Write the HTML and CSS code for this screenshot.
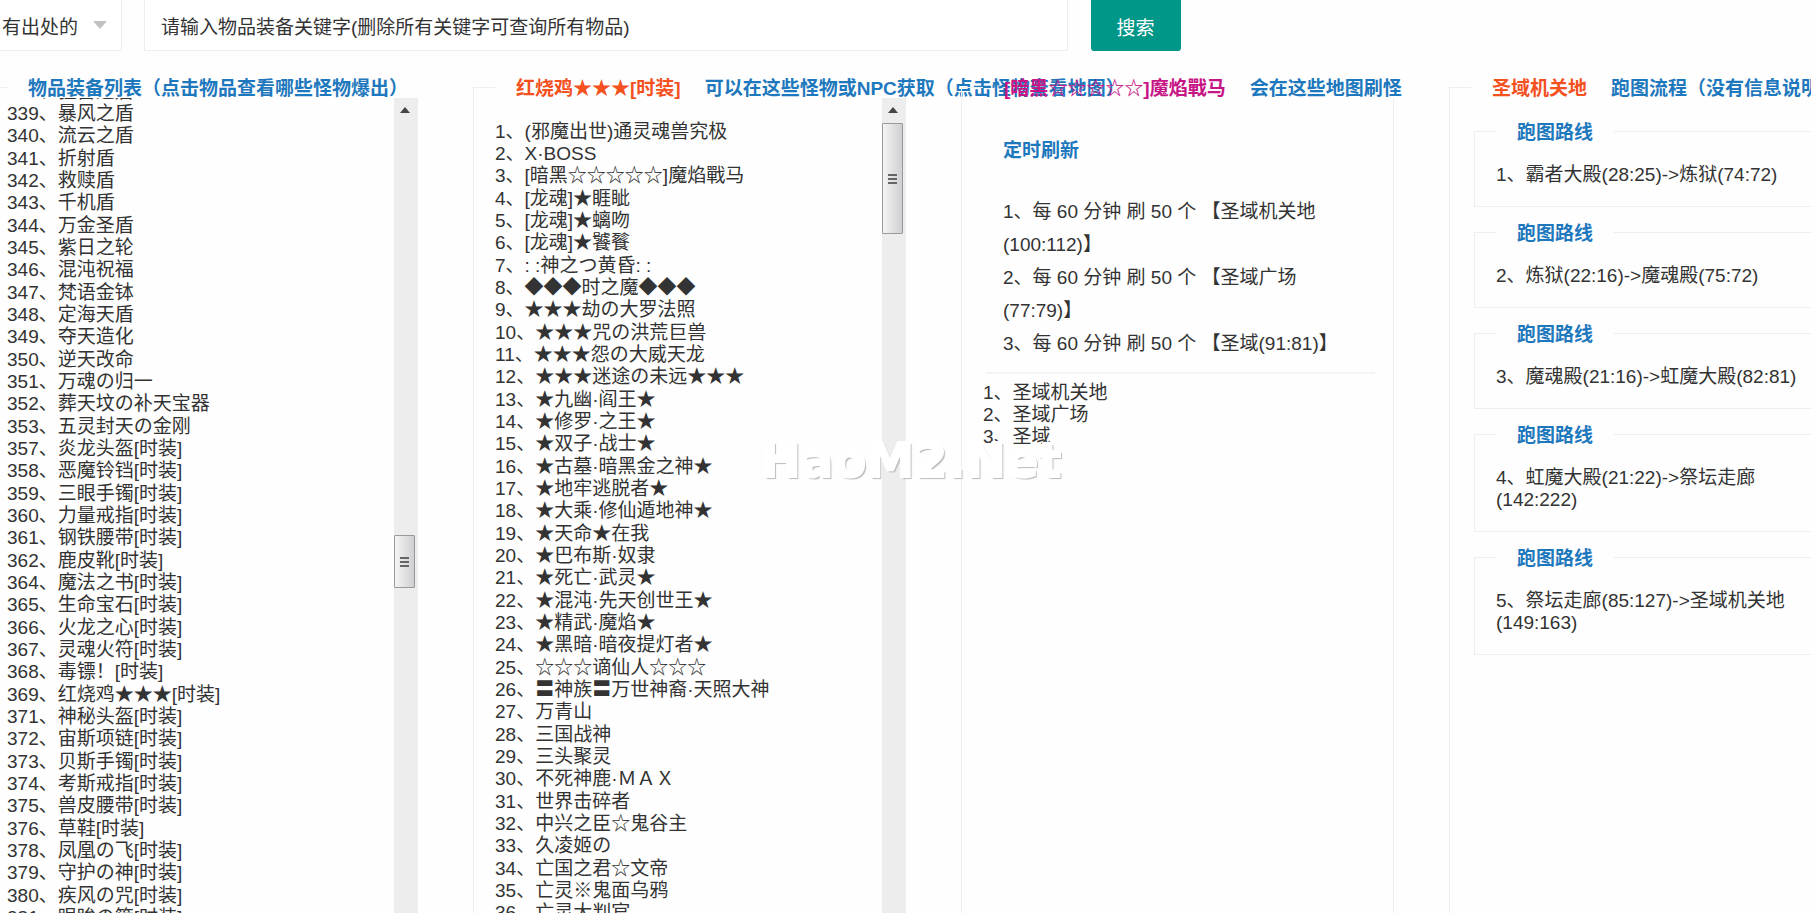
FILE: index.html
```html
<!DOCTYPE html>
<html lang="zh-CN">

<head>
    <meta charset="UTF-8">
    <meta name="viewport" content="width=device-width, initial-scale=1.0">
    <title>物品装备查询</title>
    <link rel="stylesheet" href="styles.css">
</head>

<body>
    <form class="search">
        <div class="search-type">
            <select aria-label="物品范围">
                <option>有出处的</option>
            </select>
        </div>
        <input type="text" class="search-input" aria-label="关键字" placeholder="请输入物品装备关键字(删除所有关键字可查询所有物品)">
        <button type="button" class="search-btn">搜索</button>
    </form>

    <div class="panels">
        <fieldset class="panel">
            <legend>物品装备列表（点击物品查看哪些怪物爆出）</legend>
            <div class="scroll">
                <ul class="list list-scrolled">
                    <li><a href="#">338、狂雷之盾</a></li>
                    <li><a href="#">339、暴风之盾</a></li>
                    <li><a href="#">340、流云之盾</a></li>
                    <li><a href="#">341、折射盾</a></li>
                    <li><a href="#">342、救赎盾</a></li>
                    <li><a href="#">343、千机盾</a></li>
                    <li><a href="#">344、万金圣盾</a></li>
                    <li><a href="#">345、紫日之轮</a></li>
                    <li><a href="#">346、混沌祝福</a></li>
                    <li><a href="#">347、梵语金钵</a></li>
                    <li><a href="#">348、定海天盾</a></li>
                    <li><a href="#">349、夺天造化</a></li>
                    <li><a href="#">350、逆天改命</a></li>
                    <li><a href="#">351、万魂の归一</a></li>
                    <li><a href="#">352、葬天坟の补天宝器</a></li>
                    <li><a href="#">353、五灵封天の金刚</a></li>
                    <li><a href="#">357、炎龙头盔[时装]</a></li>
                    <li><a href="#">358、恶魔铃铛[时装]</a></li>
                    <li><a href="#">359、三眼手镯[时装]</a></li>
                    <li><a href="#">360、力量戒指[时装]</a></li>
                    <li><a href="#">361、钢铁腰带[时装]</a></li>
                    <li><a href="#">362、鹿皮靴[时装]</a></li>
                    <li><a href="#">364、魔法之书[时装]</a></li>
                    <li><a href="#">365、生命宝石[时装]</a></li>
                    <li><a href="#">366、火龙之心[时装]</a></li>
                    <li><a href="#">367、灵魂火符[时装]</a></li>
                    <li><a href="#">368、毒镖！[时装]</a></li>
                    <li><a href="#">369、红烧鸡★★★[时装]</a></li>
                    <li><a href="#">371、神秘头盔[时装]</a></li>
                    <li><a href="#">372、宙斯项链[时装]</a></li>
                    <li><a href="#">373、贝斯手镯[时装]</a></li>
                    <li><a href="#">374、考斯戒指[时装]</a></li>
                    <li><a href="#">375、兽皮腰带[时装]</a></li>
                    <li><a href="#">376、草鞋[时装]</a></li>
                    <li><a href="#">378、凤凰の飞[时装]</a></li>
                    <li><a href="#">379、守护の神[时装]</a></li>
                    <li><a href="#">380、疾风の咒[时装]</a></li>
                    <li><a href="#">381、眼眸の箍[时装]</a></li>
                </ul>
                <div class="bar bar-items">
                    <svg class="bar-arrow" viewBox="0 0 10 6"><path d="M0 6 L5 0 L10 6 Z" /></svg>
                    <div class="bar-thumb"><i></i><i></i><i></i></div>
                </div>
            </div>
        </fieldset>

        <fieldset class="panel">
            <legend><span class="name-item">红烧鸡★★★[时装]</span>可以在这些怪物或NPC获取（点击怪物查看地图）</legend>
            <div class="scroll">
                <ul class="list list-padded">
                    <li><a href="#">1、(邪魔出世)通灵魂兽究极</a></li>
                    <li><a href="#">2、X·BOSS</a></li>
                    <li><a href="#">3、[暗黑☆☆☆☆☆]魔焰戰马</a></li>
                    <li><a href="#">4、[龙魂]★睚眦</a></li>
                    <li><a href="#">5、[龙魂]★螭吻</a></li>
                    <li><a href="#">6、[龙魂]★饕餮</a></li>
                    <li><a href="#">7、: :神之つ黄昏: :</a></li>
                    <li><a href="#">8、◆◆◆时之魔◆◆◆</a></li>
                    <li><a href="#">9、★★★劫の大罗法照</a></li>
                    <li><a href="#">10、★★★咒の洪荒巨兽</a></li>
                    <li><a href="#">11、★★★怨の大威天龙</a></li>
                    <li><a href="#">12、★★★迷途の未远★★★</a></li>
                    <li><a href="#">13、★九幽·阎王★</a></li>
                    <li><a href="#">14、★修罗·之王★</a></li>
                    <li><a href="#">15、★双子·战士★</a></li>
                    <li><a href="#">16、★古墓·暗黑金之神★</a></li>
                    <li><a href="#">17、★地牢逃脱者★</a></li>
                    <li><a href="#">18、★大乘·修仙遁地神★</a></li>
                    <li><a href="#">19、★天命★在我</a></li>
                    <li><a href="#">20、★巴布斯·奴隶</a></li>
                    <li><a href="#">21、★死亡·武灵★</a></li>
                    <li><a href="#">22、★混沌·先天创世王★</a></li>
                    <li><a href="#">23、★精武·魔焰★</a></li>
                    <li><a href="#">24、★黑暗·暗夜提灯者★</a></li>
                    <li><a href="#">25、☆☆☆谪仙人☆☆☆</a></li>
                    <li><a href="#">26、〓神族〓万世神裔·天照大神</a></li>
                    <li><a href="#">27、万青山</a></li>
                    <li><a href="#">28、三国战神</a></li>
                    <li><a href="#">29、三头聚灵</a></li>
                    <li><a href="#">30、不死神鹿·ＭＡＸ</a></li>
                    <li><a href="#">31、世界击碎者</a></li>
                    <li><a href="#">32、中兴之臣☆鬼谷主</a></li>
                    <li><a href="#">33、久凌姬の</a></li>
                    <li><a href="#">34、亡国之君☆文帝</a></li>
                    <li><a href="#">35、亡灵※鬼面乌鸦</a></li>
                    <li><a href="#">36、亡灵大判官</a></li>
                </ul>
                <div class="bar bar-monsters">
                    <svg class="bar-arrow" viewBox="0 0 10 6"><path d="M0 6 L5 0 L10 6 Z" /></svg>
                    <div class="bar-thumb"><i></i><i></i><i></i></div>
                </div>
            </div>
        </fieldset>

        <fieldset class="panel">
            <legend><span class="name-monster">[暗黑☆☆☆☆☆]魔焰戰马</span>会在这些地图刷怪</legend>
            <div class="maps">
                <div class="timer">
                    <h3>定时刷新</h3>
                    <p>1、每 60 分钟 刷 50 个 【圣域机关地(100:112)】</p>
                    <p>2、每 60 分钟 刷 50 个 【圣域广场(77:79)】</p>
                    <p>3、每 60 分钟 刷 50 个 【圣域(91:81)】</p>
                </div>
                <ul class="list">
                    <li><a href="#">1、圣域机关地</a></li>
                    <li><a href="#">2、圣域广场</a></li>
                    <li><a href="#">3、圣域</a></li>
                </ul>
            </div>
        </fieldset>

        <fieldset class="panel">
            <legend><span class="name-map">圣域机关地</span>跑图流程（没有信息说明不需要跑图）</legend>
            <div class="routes">
                <fieldset class="route">
                    <legend>跑图路线</legend>
                    <p>1、霸者大殿(28:25)-&gt;炼狱(74:72)</p>
                </fieldset>
                <fieldset class="route">
                    <legend>跑图路线</legend>
                    <p>2、炼狱(22:16)-&gt;魔魂殿(75:72)</p>
                </fieldset>
                <fieldset class="route">
                    <legend>跑图路线</legend>
                    <p>3、魔魂殿(21:16)-&gt;虹魔大殿(82:81)</p>
                </fieldset>
                <fieldset class="route">
                    <legend>跑图路线</legend>
                    <p>4、虹魔大殿(21:22)-&gt;祭坛走廊(142:222)</p>
                </fieldset>
                <fieldset class="route">
                    <legend>跑图路线</legend>
                    <p>5、祭坛走廊(85:127)-&gt;圣域机关地(149:163)</p>
                </fieldset>
            </div>
        </fieldset>
    </div>

    <div class="watermark">HaoM2.Net</div>
</body>

</html>
```
FILE: styles.css
```css
* {
    margin: 0;
    padding: 0;
    box-sizing: border-box;
}

body {
    height: 100vh;
    overflow: hidden;
    background-color: #fefefe;
    color: #333;
    font-family: "Liberation Sans", "Noto Sans CJK SC", sans-serif;
    font-size: 19px;
    line-height: 22px;
}

ul {
    list-style: none;
}

a {
    color: inherit;
    text-decoration: none;
}

select,
input,
button {
    font: inherit;
    color: inherit;
}

/* search bar */
.search {
    display: flex;
    height: 51px;
}

.search-type {
    position: relative;
    width: 122px;
    margin-right: 22px;
}

.search-type select {
    width: 100%;
    height: 100%;
    padding-left: 2px;
    padding-top: 6px;
    border: 1px solid #eee;
    border-width: 0 1px 1px 0;
    background-color: #fff;
    appearance: none;
}

.search-type::after {
    content: "";
    position: absolute;
    right: 15px;
    top: 21px;
    border: 7px solid transparent;
    border-top: 8px solid #c2c2c2;
    border-bottom: 0;
}

.search-input {
    width: 51%;
    margin-right: 23px;
    padding: 6px 16px 0;
    border: 1px solid #eee;
    border-top: 0;
    background-color: #fff;
}

.search-input::placeholder {
    color: #333;
    opacity: 1;
}

.search-btn {
    padding: 6px 26px 0;
    border: 0;
    border-radius: 0 0 3px 3px;
    background-color: #009688;
    color: #fff;
    cursor: pointer;
}

/* four panels, wider than the window on both sides */
.panels {
    display: grid;
    grid-template-columns: repeat(4, 1fr);
    gap: 55px;
    min-height: 100vh;
    margin: 25px -71px 0 -15px;
}

fieldset {
    min-width: 0;
    border: 1px solid #eee;
}

legend {
    height: 22px;
    margin-left: 21px;
    padding: 2px 21px 0;
    color: #1e78bd;
    font-weight: bold;
    white-space: nowrap;
}

legend span {
    margin-right: 24px;
}

.name-item,
.name-map {
    color: #f4511e;
}

.name-monster {
    color: #c71585;
}

.scroll {
    display: flex;
    justify-content: space-between;
    height: 100%;
    overflow: hidden;
}

.list {
    padding-left: 21px;
}

.list li {
    height: 22px;
    white-space: nowrap;
}

.list li:nth-child(3n) {
    margin-bottom: 1px;
}

.list-scrolled {
    margin-top: -17px;
}

.list-padded {
    padding-top: 23px;
}

/* scroll bars */
.bar {
    width: 23px;
    background-color: #ededed;
}

.bar-arrow {
    display: block;
    width: 10px;
    height: 6px;
    margin: 9px auto 10px 6px;
    fill: #444;
}

.bar-thumb {
    display: flex;
    flex-direction: column;
    align-items: center;
    justify-content: center;
    gap: 2px;
    width: 21px;
    border: 1px solid #999;
    border-radius: 1px;
    background: linear-gradient(to right, #f5f5f5, #cfcfd2);
}

.bar-thumb i {
    width: 9px;
    height: 2px;
    background-color: #666;
}

.bar-items .bar-thumb {
    height: 53px;
    margin-top: 422px;
}

.bar-monsters .bar-thumb {
    height: 111px;
}

/* maps of the chosen monster */
.maps {
    padding: 22px 18px 0 0;
}

.timer {
    margin: 0 0 8px 24px;
    padding: 12px 17px;
    border-bottom: 2px solid #f4f4f4;
}

.timer h3 {
    padding-bottom: 33px;
    padding-top: 8px;
    color: #1e78bd;
    font-size: 19px;
}

.timer p {
    line-height: 33px;
}

/* routes */
.routes {
    display: flex;
    flex-direction: column;
    gap: 14px;
    padding: 22px 24px;
}

.route {
    padding: 22px 21px 20px;
}

.route legend {
    margin-left: 0;
}

.watermark {
    position: fixed;
    left: 42%;
    top: 48%;
    color: #fff;
    font-family: "DejaVu Sans", sans-serif;
    font-size: 48px;
    font-weight: bold;
    line-height: 44px;
    -webkit-text-stroke: 2px #fff;
    text-shadow: 2px 2px 1px #bbb;
    pointer-events: none;
}
```
